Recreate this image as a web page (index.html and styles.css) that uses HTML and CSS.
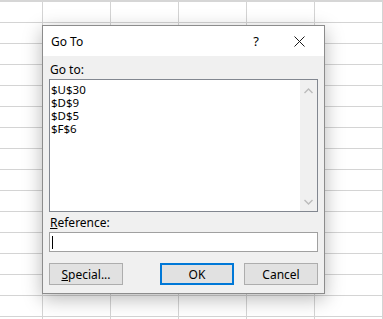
FILE: index.html
```html
<!DOCTYPE html>
<html lang="en">
<head>
  <meta charset="UTF-8">
  <title>Go To</title>
  <meta name="viewport" content="width=device-width, initial-scale=1.0">
  <link rel="stylesheet" href="styles.css">
</head>
<body>

  <div class="sheet"></div>

  <div class="dialog">
    <div class="titlebar">
      <span class="title">Go To</span>
      <span class="help">?</span>
      <span class="close">
        <svg width="11" height="11" viewBox="0 0 11 11">
          <path d="M0.5 0.5 L10.5 10.5 M10.5 0.5 L0.5 10.5" stroke="#1a1a1a" stroke-width="1" fill="none"/>
        </svg>
      </span>
    </div>

    <div class="content">
      <label class="lbl">Go to:</label>
      <div class="listbox">
        <ul class="items">
          <li>$U$30</li>
          <li>$D$9</li>
          <li>$D$5</li>
          <li>$F$6</li>
        </ul>
        <div class="scroll">
          <svg width="9" height="6" viewBox="0 0 9 6">
            <path d="M0.5 5 L4.5 1 L8.5 5" stroke="#bcbcbc" stroke-width="1.4" fill="none"/>
          </svg>
          <svg width="9" height="6" viewBox="0 0 9 6">
            <path d="M0.5 1 L4.5 5 L8.5 1" stroke="#bcbcbc" stroke-width="1.4" fill="none"/>
          </svg>
        </div>
      </div>

      <label class="lbl ref"><u>R</u>eference:</label>
      <div class="input"><span class="caret"></span></div>

      <div class="buttons">
        <button class="btn"><u>S</u>pecial...</button>
        <span class="spacer"></span>
        <button class="btn default">OK</button>
        <button class="btn">Cancel</button>
      </div>
    </div>
  </div>

</body>
</html>
```

FILE: styles.css
```css
:root {
  --face: #f0f0f0;
  --grid: #d4d4d4;
  --btn: #e1e1e1;
  --btn-border: #adadad;
  --accent: #0078d7;
  --text: #000;
}

html, body {
  margin: 0;
  height: 100%;
}

body {
  font-family: 'Noto Sans', 'Open Sans', sans-serif;
  font-size: 12px;
  color: var(--text);
  background: #fff;
  overflow: hidden;
  position: relative;
}

.sheet {
  height: 100%;
  border-top: 2px solid #d6d6d6;
  background-image:
    linear-gradient(to right, var(--grid) 1px, transparent 1px),
    linear-gradient(to bottom, var(--grid) 1px, transparent 1px);
  background-size: 68px 100%, 100% 21px;
  background-position: 42px 0, 0 20px;
  box-sizing: border-box;
}

.dialog {
  position: absolute;
  left: 42px;
  top: 25px;
  width: 281px;
  border: 1px solid #8c8c8c;
  background: var(--face);
  box-shadow: 0 5px 18px rgba(0, 0, 0, 0.28);
}

.titlebar {
  height: 30px;
  background: #fff;
  display: flex;
  align-items: center;
  padding-left: 8px;
}

.title {
  flex: 1;
  font-size: 12px;
}

.help {
  width: 22px;
  text-align: center;
  font-size: 13px;
  margin-right: 17px;
}

.close {
  width: 30px;
  display: flex;
  justify-content: center;
  margin-right: 10px;
}

.content {
  padding: 6px 6px 8px 6px;
}

.lbl {
  display: block;
  line-height: 16px;
  padding-left: 1px;
}

.listbox {
  margin-top: 1px;
  height: 131px;
  border: 1px solid #828790;
  background: #fff;
  display: flex;
}

.items {
  list-style: none;
  margin: 0;
  padding: 3px 0 0 1px;
  flex: 1;
}

.items li {
  font-size: 11.5px;
  line-height: 13px;
}

.scroll {
  width: 17px;
  background: var(--face);
  display: flex;
  flex-direction: column;
  justify-content: space-between;
  align-items: center;
  padding: 8px 0 6px;
}

.ref {
  margin-top: 3px;
}

.input {
  margin-top: 1px;
  height: 18px;
  border: 1px solid #a0a0a0;
  background: #fff;
  display: flex;
  align-items: center;
  padding-left: 2px;
}

.caret {
  width: 1px;
  height: 13px;
  background: #000;
}

.buttons {
  margin-top: 11px;
  display: flex;
  gap: 10px;
}

.spacer {
  flex: 1;
}

.btn {
  width: 74px;
  height: 22px;
  padding: 0;
  font-family: inherit;
  font-size: 12px;
  color: var(--text);
  background: var(--btn);
  border: 1px solid var(--btn-border);
}

.btn.default {
  border: 2px solid var(--accent);
}
```
